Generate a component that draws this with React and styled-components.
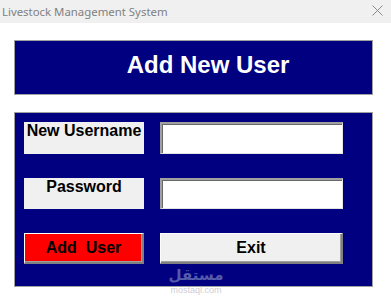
import React from "react";
import styled, { createGlobalStyle } from "styled-components";

const Global = createGlobalStyle`
  html, body { margin: 0; padding: 0; background: #ffffff; }
  body { font-family: "Liberation Sans", Arial, sans-serif; }
  * { box-sizing: border-box; }
`;

const Window = styled.div`
  position: relative;
  width: 391px;
  height: 300px;
  background: #ffffff;
  overflow: hidden;
`;

const TitleBar = styled.div`
  height: 23px;
  background: #f0f0f0;
  display: flex;
  align-items: center;
  justify-content: space-between;
  padding: 0 8px 1px 2px;
`;

const TitleText = styled.span`
  font-family: "Noto Sans", "Open Sans", sans-serif;
  font-size: 11.4px;
  color: #808080;
`;

const CloseIcon = styled.svg`
  display: block;
  margin-top: -2px;
`;

const Content = styled.div`
  display: flex;
  flex-direction: column;
  gap: 17px;
  padding: 17px 18px 0 14px;
`;

const Header = styled.div`
  height: 55px;
  background: #000080;
  border: 1px solid #a0a0a0;
  display: flex;
  align-items: center;
  justify-content: center;
  padding: 0 0 5px 29px;
  color: #ffffff;
  font-size: 24px;
  font-weight: bold;
`;

const Panel = styled.div`
  height: 175px;
  background: #000080;
  border: 1px solid #a0a0a0;
  padding: 9px 0 0 9px;
  display: grid;
  grid-template-columns: 120px 183px;
  grid-template-rows: 32px 31px 31px;
  column-gap: 16px;
  row-gap: 24px;
`;

const Label = styled.div`
  background: #f0f0f0;
  color: #000000;
  font-size: 16px;
  font-weight: bold;
  text-align: center;
  line-height: 18px;
  white-space: nowrap;
`;

const Input = styled.input`
  display: block;
  width: 100%;
  height: 100%;
  margin: 0;
  background: #ffffff;
  border-style: solid;
  border-width: 2px 1px 1px 2px;
  border-color: #a0a0a0 #e3e3e3 #e3e3e3 #a0a0a0;
  box-shadow: inset 1px 1px 0 #696969;
  outline: none;
`;

const Button = styled.button`
  display: flex;
  align-items: center;
  justify-content: center;
  margin: 0;
  padding: 0 0 1px 0;
  background: ${(p) => (p.$danger ? "#ff0000" : "#f0f0f0")};
  color: #000000;
  font-family: "Liberation Sans", Arial, sans-serif;
  font-size: 16px;
  font-weight: bold;
  white-space: pre;
  border-style: solid;
  border-width: 1px 2px 2px 1px;
  border-color: #ffffff #808080 #808080 #ffffff;
  box-shadow: inset -1px -1px 0 #a0a0a0;
  cursor: pointer;
`;

const Watermark = styled.div`
  position: absolute;
  left: 170px;
  top: 264px;
  width: 52px;
  display: flex;
  flex-direction: column;
  align-items: center;
  pointer-events: none;
`;

const WatermarkArabic = styled.span`
  font-family: "DejaVu Sans", sans-serif;
  font-size: 15px;
  font-weight: bold;
  line-height: 22px;
  color: rgba(170, 180, 215, 0.5);
`;

const WatermarkLatin = styled.span`
  font-family: "Liberation Sans", Arial, sans-serif;
  font-size: 9px;
  line-height: 8px;
  color: rgba(190, 190, 200, 0.8);
`;

export default function App() {
  return (
    <>
      <Global />
      <Window>
        <TitleBar>
          <TitleText>Livestock Management System</TitleText>
          <CloseIcon width="11" height="11" viewBox="0 0 11 11">
            <path d="M0.5 0.5 L10.5 10.5 M10.5 0.5 L0.5 10.5" stroke="#8a8a8a" strokeWidth="1" fill="none" />
          </CloseIcon>
        </TitleBar>
        <Content>
          <Header>Add New User</Header>
          <Panel>
            <Label>New Username</Label>
            <Input type="text" />
            <Label>Password</Label>
            <Input type="password" />
            <Button $danger>{"Add  User"}</Button>
            <Button>Exit</Button>
          </Panel>
        </Content>
        <Watermark>
          <WatermarkArabic>مستقل</WatermarkArabic>
          <WatermarkLatin>mostaql.com</WatermarkLatin>
        </Watermark>
      </Window>
    </>
  );
}
